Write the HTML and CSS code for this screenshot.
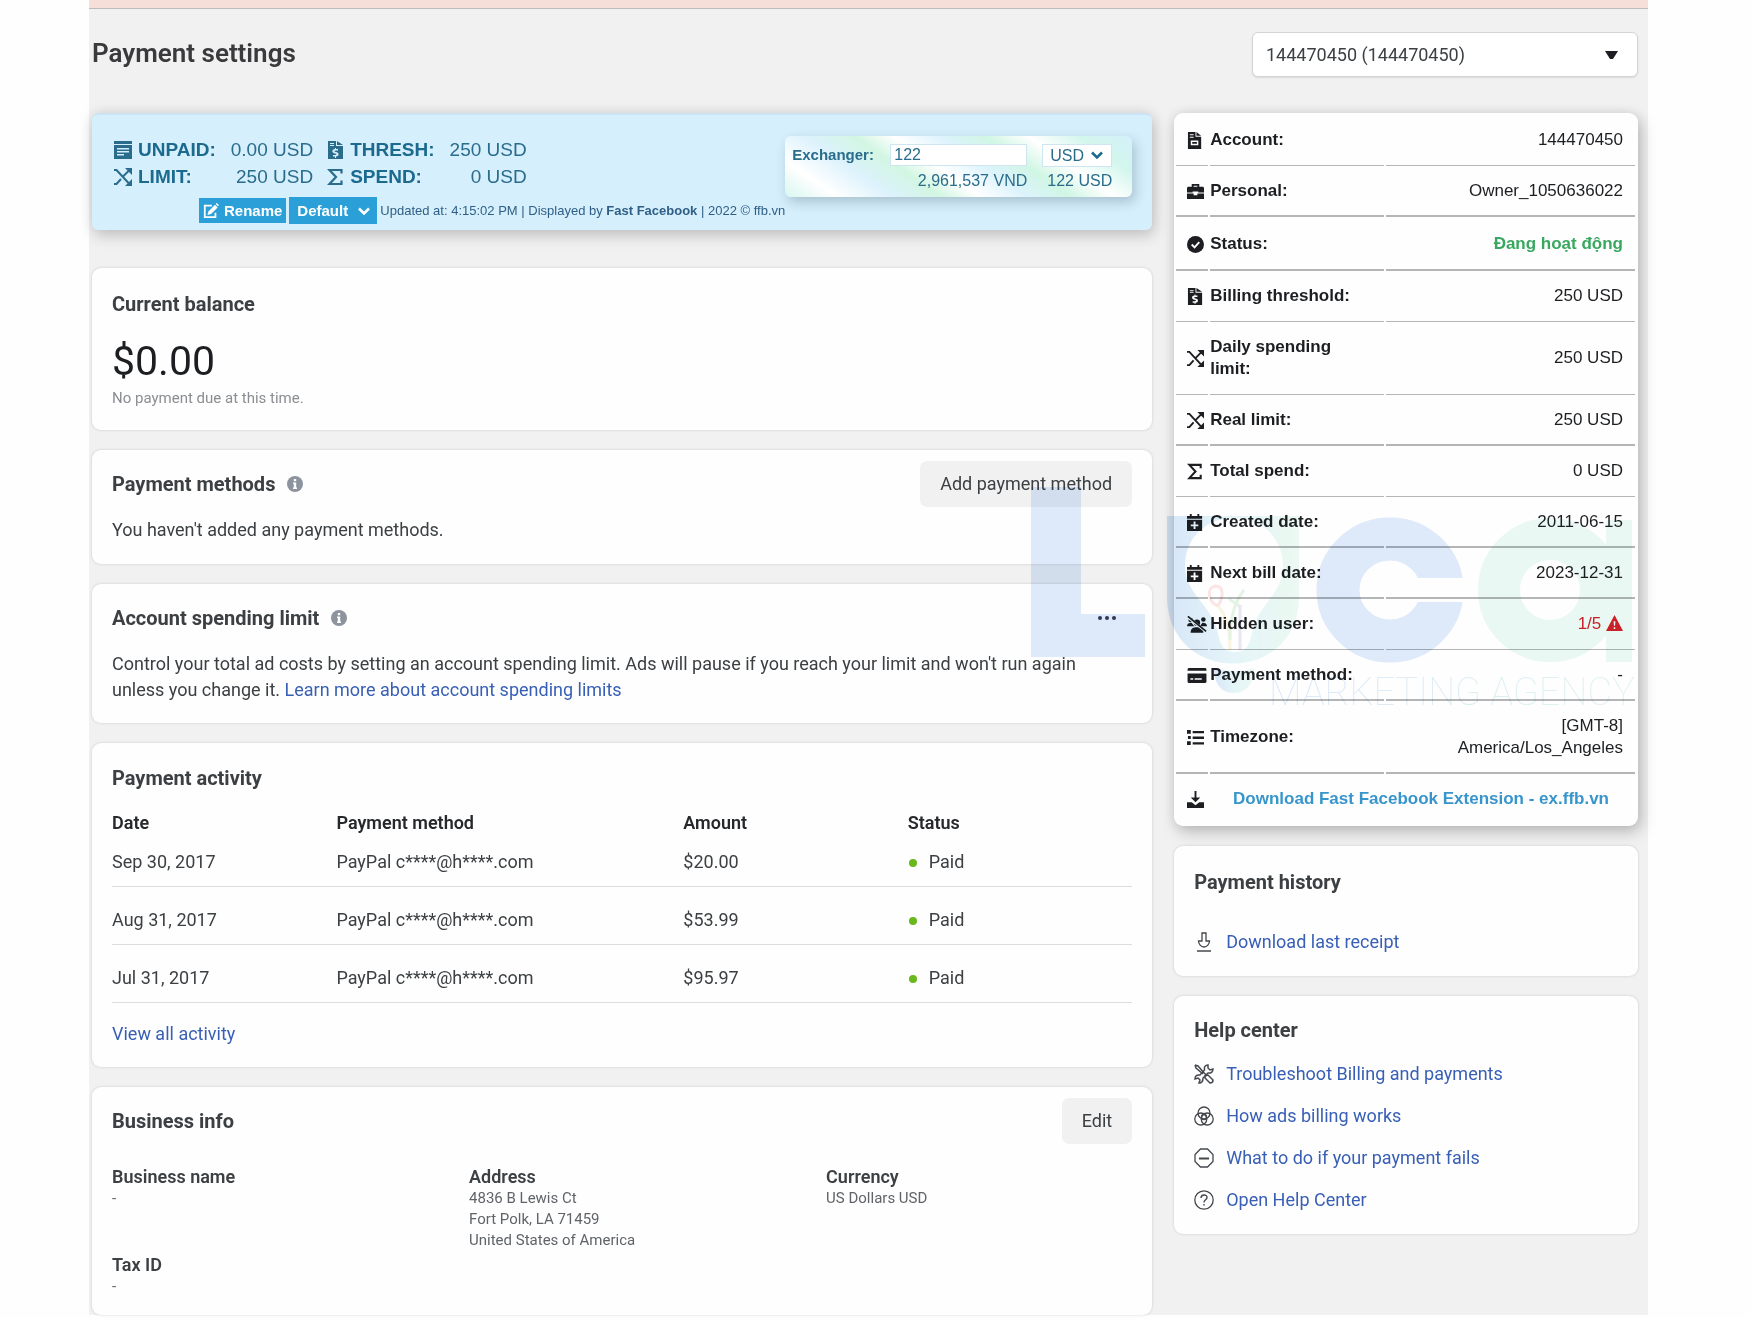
FILE: index.html
```html
<!DOCTYPE html>
<html lang="en">
<head>
  <meta charset="UTF-8" />
  <meta name="viewport" content="width=device-width, initial-scale=1.0" />
  <title>Payment settings</title>
  <link rel="stylesheet" href="styles.css">
</head>
<body>

<!-- icon set -->
<svg class="sprite" aria-hidden="true">
  <symbol id="i-bill" viewBox="0 0 18 18">
    <path fill="currentColor" fill-rule="evenodd" d="M0 0h18v3H0zM0 4h18v14H0zM3 7v1.500h12V7zM3 10v1.500h12V10zM3 13v1.500h7V13z"/>
  </symbol>
  <symbol id="i-file-usd" viewBox="0 0 18 18">
    <path fill="currentColor" fill-rule="evenodd" d="M1 0h8v5h7v13H1zM10 0l6 4h-6zM3 2v1h4V2zM3 4v1h4V4zM8 7v1C4.500 8 4.500 12 8 12.500c2 .3 2 1.500 0 1.500H6v1.500h2V17h1v-1.500c3.500 0 3.500-4 0-4.500-2-.3-2-1.500 0-1.500h2V8H9V7z"/>
  </symbol>
  <symbol id="i-file" viewBox="0 0 18 18">
    <path fill="currentColor" fill-rule="evenodd" d="M1 0h8v5h6v13H1zM10 0l5 4h-5zM3 2.500v1h4v-1zM3 5v1h4V5zM4 9v5h8V9zM5.500 10.500h5v2h-5z"/>
  </symbol>
  <symbol id="i-shuffle" viewBox="0 0 18 18">
    <path fill="none" stroke="currentColor" stroke-width="2" d="M0 2h2.500L14.500 15M0 16h2.500l4.500-5M9.500 8L15 2.500"/>
    <path fill="currentColor" d="M11 0h7v7zM18 11v7h-7z"/>
  </symbol>
  <symbol id="i-sigma" viewBox="0 0 18 18">
    <path fill="none" stroke="currentColor" stroke-width="2.200" d="M14.500 5.500V2H2.500l6.500 7-6.500 7h12v-3.500"/>
  </symbol>
  <symbol id="i-edit" viewBox="0 0 18 18">
    <path fill="none" stroke="currentColor" stroke-width="2" d="M10 3H2v13h12v-5"/>
    <path fill="currentColor" d="M6 9.500L13.500 2l3 3L9 12.500l-4 1zM14.300 1.200L15.500 0 18 2.500l-1.200 1.200z"/>
  </symbol>
  <symbol id="i-case" viewBox="0 0 18 18">
    <path fill="currentColor" fill-rule="evenodd" d="M5 4V1h8v3h4l1 1v5h-6V9H6v1H0V5l1-1zM7 3v1h4V3zM0 11h7v2h4v-2h7v6H0z"/>
  </symbol>
  <symbol id="i-check" viewBox="0 0 18 18">
    <circle cx="9" cy="9" r="9" fill="currentColor"/>
    <path fill="none" stroke="#fff" stroke-width="2" d="M5 9l3 3 5-5.500"/>
  </symbol>
  <symbol id="i-cal" viewBox="0 0 18 18">
    <path fill="currentColor" fill-rule="evenodd" d="M0 2h3V0h2v2h6V0h2v2h3v3H0zM0 6h16v12H0zM7 8v3H4v2h3v3h2v-3h3v-2H9V8z"/>
  </symbol>
  <symbol id="i-users" viewBox="0 0 22 18">
    <g fill="currentColor">
      <circle cx="4" cy="4" r="2.500"/><circle cx="18" cy="3.500" r="2.500"/><circle cx="11" cy="7" r="3.500"/>
      <path d="M0 11c0-3 2-4 5-4l3 4zM22 11c0-3-2-4-5-4l-3 4zM4 18c0-5 3-6 7-6s7 1 7 6z"/>
    </g>
    <path d="M1 1l20 16" stroke="#fff" stroke-width="3"/>
    <path d="M1 0l20 16.500" stroke="currentColor" stroke-width="1.800"/>
  </symbol>
  <symbol id="i-card" viewBox="0 0 20 18">
    <path fill="currentColor" fill-rule="evenodd" d="M1 1h18l1 1v2H0V2zM0 7h20v9l-1 1H1l-1-1zM3 12v1.500h3V12zM7.500 12v1.500H15V12z"/>
  </symbol>
  <symbol id="i-list" viewBox="0 0 18 18">
    <path fill="currentColor" d="M0 1h4v4H0zM6 2h12v2.500H6zM1 7.500h3v3H1zM6 8h12v2.500H6zM0 13h4v4H0zM6 14h12v2.500H6z"/>
  </symbol>
  <symbol id="i-save" viewBox="0 0 18 18">
    <path fill="currentColor" d="M8 0h2v7h4l-5 5-5-5h4zM0 12h5l4 3 4-3h5v6H0z"/>
  </symbol>
  <symbol id="i-warn" viewBox="0 0 18 18">
    <path fill="currentColor" d="M9 0l9 17H0z"/>
    <path fill="#fff" d="M8 6.500h2l-.4 5H8.400zM8.200 13h1.600v1.800H8.200z"/>
  </symbol>
  <symbol id="i-info" viewBox="0 0 16 16">
    <circle cx="8" cy="8" r="8" fill="#8d949e"/>
    <path fill="#fff" d="M6.800 3h2.400v2.200H6.800zM6 6.500h3.200v5H10V13H6v-1.500h.8V8H6z"/>
  </symbol>
  <symbol id="i-chevron" viewBox="0 0 12 8">
    <path fill="none" stroke="currentColor" stroke-width="2.500" d="M1 1.500l5 5 5-5"/>
  </symbol>
  <symbol id="i-download" viewBox="0 0 20 20">
    <path fill="none" stroke="currentColor" stroke-width="1.300" d="M8 1h4v8h3.500c0 3-2.500 6-5.500 6s-5.500-3-5.500-6H8zM3 19h14"/>
  </symbol>
  <symbol id="i-tools" viewBox="0 0 20 20">
    <g fill="none" stroke="currentColor" stroke-width="1.500">
      <path d="M1 1l3 1 7 8 2 1M1 1l1 3 7 6M11 12l3-1 5 5c0 2-1 3-3 3l-5-5z"/>
      <path d="M14 1c-3 0-4 2-3.500 5L6 11c-3-.5-5 1-5 4l3-1 2 2-1 3c3 0 4-2 4-5l5-5c3 .5 5-1 5-4l-3 1-2-2z"/>
    </g>
  </symbol>
  <symbol id="i-rings" viewBox="0 0 20 20">
    <g fill="none" stroke="currentColor" stroke-width="1.300">
      <circle cx="10" cy="7" r="6"/><circle cx="6.800" cy="13" r="6"/><circle cx="13.200" cy="13" r="6"/>
      <circle cx="10" cy="11" r="2.500"/>
    </g>
  </symbol>
  <symbol id="i-minus" viewBox="0 0 20 20">
    <path fill="none" stroke="currentColor" stroke-width="1.300" d="M6.500 1h7L19 6.500v7L13.500 19h-7L1 13.500v-7z"/>
    <path stroke="currentColor" stroke-width="2" d="M5 10.500h10"/>
  </symbol>
  <symbol id="i-help" viewBox="0 0 20 20">
    <circle cx="10" cy="10" r="9.200" fill="none" stroke="currentColor" stroke-width="1.300"/>
    <path fill="none" stroke="currentColor" stroke-width="1.400" d="M7 8c0-4 6-4 6-.5 0 2.500-3 2-3 5M10 14v1.600"/>
  </symbol>
</svg>

<div class="page">
  <div class="topbar"></div>

  <header class="page-header">
    <h1>Payment settings</h1>
    <div class="select-wrap account-select">
      <select aria-label="Ad account">
        <option>144470450 (144470450)</option>
      </select>
      <svg class="caret" viewBox="0 0 13 8"><path d="M0 0h13L8 8H5z"/></svg>
    </div>
  </header>

  <main class="columns">
    <div class="col">

      <!-- extension bar -->
      <section class="ffb">
        <div class="ffb-left">
          <div class="stats">
            <svg class="icon"><use href="#i-bill"/></svg><b>UNPAID:</b><span>0.00 USD</span>
            <svg class="icon second"><use href="#i-file-usd"/></svg><b>THRESH:</b><span>250 USD</span>
            <svg class="icon"><use href="#i-shuffle"/></svg><b>LIMIT:</b><span>250 USD</span>
            <svg class="icon second"><use href="#i-sigma"/></svg><b>SPEND:</b><span>0 USD</span>
          </div>
          <div class="ffb-tools">
            <button class="rename"><svg><use href="#i-edit"/></svg>Rename</button>
            <div class="select-wrap theme-select">
              <select aria-label="Theme"><option>Default</option></select>
              <svg class="chevron"><use href="#i-chevron"/></svg>
            </div>
            <small>Updated at: 4:15:02 PM | Displayed by <b>Fast Facebook</b> | 2022 © ffb.vn</small>
          </div>
        </div>
        <div class="exchanger">
          <label for="amount">Exchanger:</label>
          <input id="amount" type="text" value="122">
          <div class="select-wrap money-select">
            <select aria-label="Currency"><option>USD</option></select>
            <svg class="chevron"><use href="#i-chevron"/></svg>
          </div>
          <output class="vnd" for="amount">2,961,537 VND</output>
          <output for="amount">122 USD</output>
        </div>
      </section>

      <section class="card balance">
        <h2>Current balance</h2>
        <p class="total">$0.00</p>
        <p class="muted">No payment due at this time.</p>
      </section>

      <section class="card methods">
        <div class="card-head">
          <h2>Payment methods <svg class="info"><use href="#i-info"/></svg></h2>
          <button class="btn">Add payment method</button>
        </div>
        <p>You haven't added any payment methods.</p>
      </section>

      <section class="card limit">
        <div class="card-head">
          <h2>Account spending limit <svg class="info"><use href="#i-info"/></svg></h2>
          <button class="more" aria-label="More options"><i></i><i></i><i></i></button>
        </div>
        <p>Control your total ad costs by setting an account spending limit. Ads will pause if you reach your limit and won't run again unless you change it. <a href="#">Learn more about account spending limits</a></p>
      </section>

      <section class="card activity">
        <h2>Payment activity</h2>
        <table>
          <thead>
            <tr><th>Date</th><th>Payment method</th><th>Amount</th><th>Status</th></tr>
          </thead>
          <tbody>
            <tr><td>Sep 30, 2017</td><td>PayPal c****@h****.com</td><td>$20.00</td><td><span class="paid">Paid</span></td></tr>
            <tr><td>Aug 31, 2017</td><td>PayPal c****@h****.com</td><td>$53.99</td><td><span class="paid">Paid</span></td></tr>
            <tr><td>Jul 31, 2017</td><td>PayPal c****@h****.com</td><td>$95.97</td><td><span class="paid">Paid</span></td></tr>
          </tbody>
        </table>
        <a href="#">View all activity</a>
      </section>

      <section class="card business">
        <div class="card-head">
          <h2>Business info</h2>
          <button class="btn">Edit</button>
        </div>
        <div class="business-grid">
          <div>
            <h3>Business name</h3>
            <p>-</p>
          </div>
          <div>
            <h3>Address</h3>
            <p>4836 B Lewis Ct<br>Fort Polk, LA 71459<br>United States of America</p>
          </div>
          <div>
            <h3>Currency</h3>
            <p>US Dollars USD</p>
          </div>
          <div>
            <h3>Tax ID</h3>
            <p>-</p>
          </div>
        </div>
      </section>
    </div>

    <aside class="col">
      <!-- account details -->
      <section class="details">
        <table>
          <tr><td><svg class="icon"><use href="#i-file"/></svg></td><th>Account:</th><td>144470450</td></tr>
          <tr class="thick"><td><svg class="icon"><use href="#i-case"/></svg></td><th>Personal:</th><td>Owner_1050636022</td></tr>
          <tr class="thick status"><td><svg class="icon"><use href="#i-check"/></svg></td><th>Status:</th><td class="ok">Đang hoạt động</td></tr>
          <tr><td><svg class="icon"><use href="#i-file-usd"/></svg></td><th>Billing threshold:</th><td>250 USD</td></tr>
          <tr><td><svg class="icon"><use href="#i-shuffle"/></svg></td><th>Daily spending<br>limit:</th><td>250 USD</td></tr>
          <tr class="thick"><td><svg class="icon"><use href="#i-shuffle"/></svg></td><th>Real limit:</th><td>250 USD</td></tr>
          <tr><td><svg class="icon"><use href="#i-sigma"/></svg></td><th>Total spend:</th><td>0 USD</td></tr>
          <tr class="thick"><td><svg class="icon"><use href="#i-cal"/></svg></td><th>Created date:</th><td>2011-06-15</td></tr>
          <tr class="thick"><td><svg class="icon"><use href="#i-cal"/></svg></td><th>Next bill date:</th><td>2023-12-31</td></tr>
          <tr><td><svg class="icon wide"><use href="#i-users"/></svg></td><th>Hidden user:</th><td class="bad">1/5 <svg class="icon"><use href="#i-warn"/></svg></td></tr>
          <tr class="thick"><td><svg class="icon wide"><use href="#i-card"/></svg></td><th>Payment method:</th><td>-</td></tr>
          <tr class="thick"><td><svg class="icon"><use href="#i-list"/></svg></td><th>Timezone:</th><td>[GMT-8]<br>America/Los_Angeles</td></tr>
          <tr><td><svg class="icon"><use href="#i-save"/></svg></td><td class="ext" colspan="2"><a href="#">Download Fast Facebook Extension - ex.ffb.vn</a></td></tr>
        </table>
      </section>

      <section class="card history">
        <h2>Payment history</h2>
        <ul class="links">
          <li><svg><use href="#i-download"/></svg><a href="#">Download last receipt</a></li>
        </ul>
      </section>

      <section class="card help">
        <h2>Help center</h2>
        <ul class="links">
          <li><svg><use href="#i-tools"/></svg><a href="#">Troubleshoot Billing and payments</a></li>
          <li><svg><use href="#i-rings"/></svg><a href="#">How ads billing works</a></li>
          <li><svg><use href="#i-minus"/></svg><a href="#">What to do if your payment fails</a></li>
          <li><svg><use href="#i-help"/></svg><a href="#">Open Help Center</a></li>
        </ul>
      </section>
    </aside>
  </main>

  <!-- agency logo over the page -->
  <svg class="watermark" viewBox="0 0 606 230" aria-hidden="true">
    <defs>
      <linearGradient id="bulb" x1="0" x2="1">
        <stop offset="0" stop-color="#74aaea"/>
        <stop offset=".5" stop-color="#a4dce8"/>
        <stop offset="1" stop-color="#bcecd2"/>
      </linearGradient>
      <linearGradient id="tag" x1="0" x2="1">
        <stop offset="0" stop-color="#9cc0f0"/>
        <stop offset="1" stop-color="#a8e0d4"/>
      </linearGradient>
      <mask id="c-gap" maskUnits="userSpaceOnUse" x="0" y="0" width="606" height="230">
        <rect width="606" height="230" fill="#fff"/>
        <rect x="385" y="91" width="60" height="24" fill="#000"/>
      </mask>
      <mask id="bulb-hole" maskUnits="userSpaceOnUse" x="0" y="0" width="606" height="230">
        <rect width="606" height="230" fill="#fff"/>
        <path fill="#000" d="M203 31c-28 0-49 20-49 48 0 26 22 36 31 60 4 14 4 26 19 26s15-12 19-26c8-24 29-34 29-60 0-28-21-48-49-48z"/>
      </mask>
    </defs>
    <g opacity=".28">
      <path fill="#8cb4ee" d="M0 0h50v127h64v43H0z"/>
      <path fill="url(#bulb)" mask="url(#bulb-hole)" d="M136 29h132v80c0 90-132 90-132 0z"/>
      <path fill="url(#bulb)" d="M183 181c10 4 30 4 40 0 0 14-6 25-20 25s-20-11-20-25z"/>
      <ellipse cx="359" cy="103" rx="52" ry="51" fill="none" stroke="#8cb4ee" stroke-width="43" mask="url(#c-gap)"/>
      <circle cx="519" cy="103" r="51" fill="none" stroke="#b6e8dc" stroke-width="42"/>
      <path fill="#b6e8dc" d="M575 33h26v142h-26z"/>
      <g fill="none" stroke-width="3">
        <path stroke="#f4a0a0" d="M187 119c-10-4-12-18-3-20 10 0 8 12 3 20z"/>
        <path stroke="#eedc90" d="M187 119c10 10 12 30 12 44"/>
        <path stroke="#a0dca0" d="M213 103c-8 10-14 26-14 50M198 112l12 8"/>
        <path stroke="#b8a4dc" d="M209 118v45"/>
      </g>
    </g>
    <text x="238" y="218">MARKETING AGENCY</text>
  </svg>
</div>

</body>
</html>
```
FILE: styles.css
```css
* { box-sizing: border-box; }
body {
  margin: 0;
  background: #fefefe;
  font-family: Roboto, sans-serif;
  font-size: 18px;
  line-height: 26px;
  color: #3c4043;
}
h1, h2, h3, p, ul {
  margin: 0;
  padding: 0;
}
a {
  color: #385fb5;
  text-decoration: none;
}
a:hover { text-decoration: underline; }
button, select, input { font: inherit; color: inherit; }
button, select { cursor: pointer; }
table { border-collapse: collapse; width: 100%; }
.sprite { position: absolute; width: 0; height: 0; }

.page {
  position: relative;
  margin: 0 103px 3px 89px;
  background: #f1f1f1;
}
.topbar {
  height: 9px;
  background: #f5dfd8;
  border-bottom: 1px solid #bdbdbd;
}
.page-header {
  display: flex;
  justify-content: space-between;
  align-items: flex-start;
  padding: 23px 10px 36px 3px;
}
h1 {
  font-size: 26px;
  font-weight: 600;
  line-height: 42px;
  color: #3a3a3c;
}
h2 {
  display: flex;
  align-items: center;
  gap: 12px;
  font-size: 20px;
  font-weight: 700;
  line-height: 26px;
}
h3 {
  font-size: 18px;
  font-weight: 600;
  line-height: 22px;
}

/* selects */
.select-wrap { position: relative; }
.select-wrap select {
  appearance: none;
  width: 100%;
  height: 100%;
  border: 0;
  background: none;
}
.select-wrap svg {
  position: absolute;
  top: 0;
  bottom: 0;
  margin: auto 0;
  pointer-events: none;
}
.account-select {
  width: 386px;
  height: 45px;
  background: #fff;
  border: 1px solid #d4d4d6;
  border-radius: 6px;
  box-shadow: 0 1px 2px rgba(0, 0, 0, 0.1);
}
.account-select select { padding: 0 13px; }
.caret { right: 19px; width: 13px; height: 8px; fill: #1c1e21; }
.chevron { width: 12px; height: 8px; }

.columns {
  display: grid;
  grid-template-columns: minmax(0, 16fr) minmax(0, 7fr);
  align-items: start;
  gap: 22px;
  padding: 0 10px 0 3px;
}
.col {
  display: flex;
  flex-direction: column;
  gap: 20px;
}

/* extension bar */
.ffb {
  display: flex;
  justify-content: space-between;
  align-items: flex-start;
  height: 117px;
  margin-bottom: 18px;
  padding: 21px 22px 0 22px;
  background: #d5effc;
  border-top: 2px solid #cbe3f2;
  border-radius: 6px;
  box-shadow: 2px 6px 14px rgba(60, 50, 60, 0.22), 0 -2px 14px rgba(0, 0, 0, 0.08);
  font-family: "Liberation Sans", Arial, sans-serif;
  color: #2a6c8c;
  white-space: nowrap;
}
.stats {
  display: grid;
  grid-template-columns: 24px auto auto 37px auto auto;
  justify-content: start;
  align-items: center;
  font-size: 19px;
  line-height: 27px;
}
.stats b { color: #1c6a8e; }
.stats span { text-align: right; padding-left: 15px; }
.icon { width: 18px; height: 18px; }
.second { margin-left: 14px; }
.ffb-tools {
  display: flex;
  align-items: center;
  gap: 3px;
  margin: 7px 0 0 85px;
}
.rename {
  display: flex;
  align-items: center;
  gap: 5px;
  height: 25px;
  padding: 0 4px;
  border: 0;
  background: #2ba0d8;
  color: #fff;
  font-size: 15px;
  font-weight: bold;
}
.rename svg { width: 16px; height: 16px; }
.theme-select {
  width: 88px;
  height: 27px;
  background: #2ba0d8;
  color: #fff;
  font-size: 15px;
  font-weight: bold;
}
.theme-select select { padding: 0 8px; }
.theme-select .chevron { right: 7px; }
.ffb small { font-size: 13px; color: #2f5f86; }
.exchanger {
  display: grid;
  grid-template-columns: 83px 137px 70px;
  align-items: center;
  justify-items: end;
  column-gap: 15px;
  height: 61px;
  padding: 6px 20px 4px 7px;
  border-radius: 6px;
  background: linear-gradient(35deg, #d8f6f0 0%, #fff 12%, #dcf2fc 25%, #d2f6e2 36%, #fff 45%, #dcf3fc 56%, #d0f6e4 66%, #fff 76%, #d2f6ec 88%, #d4f0fa 100%);
  box-shadow: 3px 5px 12px rgba(40, 60, 80, 0.25);
  font-size: 16px;
  line-height: 22px;
}
.exchanger label { font-size: 15px; font-weight: bold; justify-self: start; }
.exchanger input {
  width: 100%;
  height: 22px;
  padding: 0 3px;
  border: 1px solid #cfe6f0;
  background: #fff;
}
.money-select {
  width: 100%;
  height: 23px;
  background: #fff;
  border: 1px solid #cfe6f0;
}
.money-select select { padding: 0 7px; }
.money-select .chevron { right: 8px; color: #1c6a8e; }
.vnd { grid-column: 2; }

/* cards */
.card {
  padding: 23px 20px;
  background: #fefefe;
  border-radius: 9px;
  box-shadow: 0 0 3px rgba(0, 0, 0, 0.16);
}
.card-head {
  display: flex;
  justify-content: space-between;
  align-items: center;
}
.info { width: 16px; height: 16px; }
.btn {
  height: 46px;
  margin: -12px 0;
  padding: 0 20px;
  border: 0;
  border-radius: 7px;
  background: #f1f1f2;
}
.total {
  margin-top: 22px;
  font-size: 41px;
  line-height: 44px;
  color: #1c1e21;
}
.muted {
  margin-top: 4px;
  font-size: 15px;
  line-height: 22px;
  color: #8a8d91;
}
.balance { padding-bottom: 21px; }
.methods { padding: 21px 20px; }
.methods p { margin-top: 20px; }
.more {
  display: flex;
  gap: 3px;
  padding: 16px;
  margin: -16px 0;
  border: 0;
  background: none;
}
.more i { width: 4px; height: 4px; border-radius: 50%; background: #3a3a55; }
.limit { padding: 21px 20px 20px; }
.limit p { margin-top: 20px; }

.activity { padding: 22px 20px 20px; }
.activity table { margin: 20px 0 18px; table-layout: fixed; }
.activity th {
  width: 22%;
  padding: 0 0 13px;
  line-height: 24px;
  font-weight: 600;
  text-align: left;
  color: #26282b;
}
.activity th:nth-child(2) { width: 34%; }
.activity td { padding: 19px 0 10px; line-height: 28px; border-bottom: 1px solid #dcdde0; }
.activity tbody tr:first-child td { padding-top: 0; }
.paid::before {
  content: "";
  display: inline-block;
  width: 8px;
  height: 8px;
  margin: 0 12px 1px 1px;
  border-radius: 50%;
  background: #6ab81c;
}

.business { padding: 21px 20px 18px; }
.business-grid {
  display: grid;
  grid-template-columns: 35% 35% 30%;
  row-gap: 3px;
  margin-top: 32px;
}
.business-grid p { font-size: 15px; line-height: 21px; color: #606468; }

/* account details */
.details {
  padding: 2px 1px 2px 0;
  background: #fefefe;
  border-radius: 9px;
  box-shadow: 3px 6px 16px rgba(0, 0, 0, 0.22), 0 0 12px rgba(0, 0, 0, 0.08);
  font-family: "Liberation Sans", Arial, sans-serif;
  font-size: 17px;
  line-height: 22px;
  color: #1c1e21;
}
.details table { border-collapse: separate; border-spacing: 2px 0; }
.details th, .details td {
  padding: 14px 12px 14px 0;
  border-bottom: 1px solid #b4b5b7;
  text-align: right;
}
.details .thick th, .details .thick td { padding-bottom: 13px; border-bottom-width: 2px; }
.details .status th, .details .status td { padding-top: 16px; padding-bottom: 14px; }
.details th { width: 174px; padding-right: 0; text-align: left; white-space: nowrap; }
.details td:first-child { width: 32px; padding-left: 11px; padding-right: 0; text-align: left; }
.details tr:last-child td { border-bottom: 0; }
.details svg { display: block; width: 17px; height: 17px; }
.details .wide { width: 20px; }
.details .ok { color: #38a860; font-weight: bold; }
.details .bad { color: #dc2028; }
.details .bad svg { display: inline-block; vertical-align: -3px; }
.details td.ext { padding-right: 26px; }
.ext a { color: #3795cb; font-weight: bold; }

/* side cards */
.links { list-style: none; }
.links li { display: flex; align-items: center; gap: 12px; }
.links svg { width: 20px; height: 20px; color: #44484d; }
.history { padding-bottom: 21px; }
.history .links { margin-top: 34px; }
.help { padding: 21px 20px; }
.help .links { display: grid; gap: 16px; margin-top: 18px; }

/* logo overlay */
.watermark {
  position: absolute;
  top: 487px;
  right: 11px;
  width: 606px;
  height: 230px;
  pointer-events: none;
  mix-blend-mode: multiply;
}
.watermark text {
  font-family: Roboto, sans-serif;
  font-weight: 100;
  font-size: 38px;
  fill: url(#tag);
  opacity: 0.35;
}
```
